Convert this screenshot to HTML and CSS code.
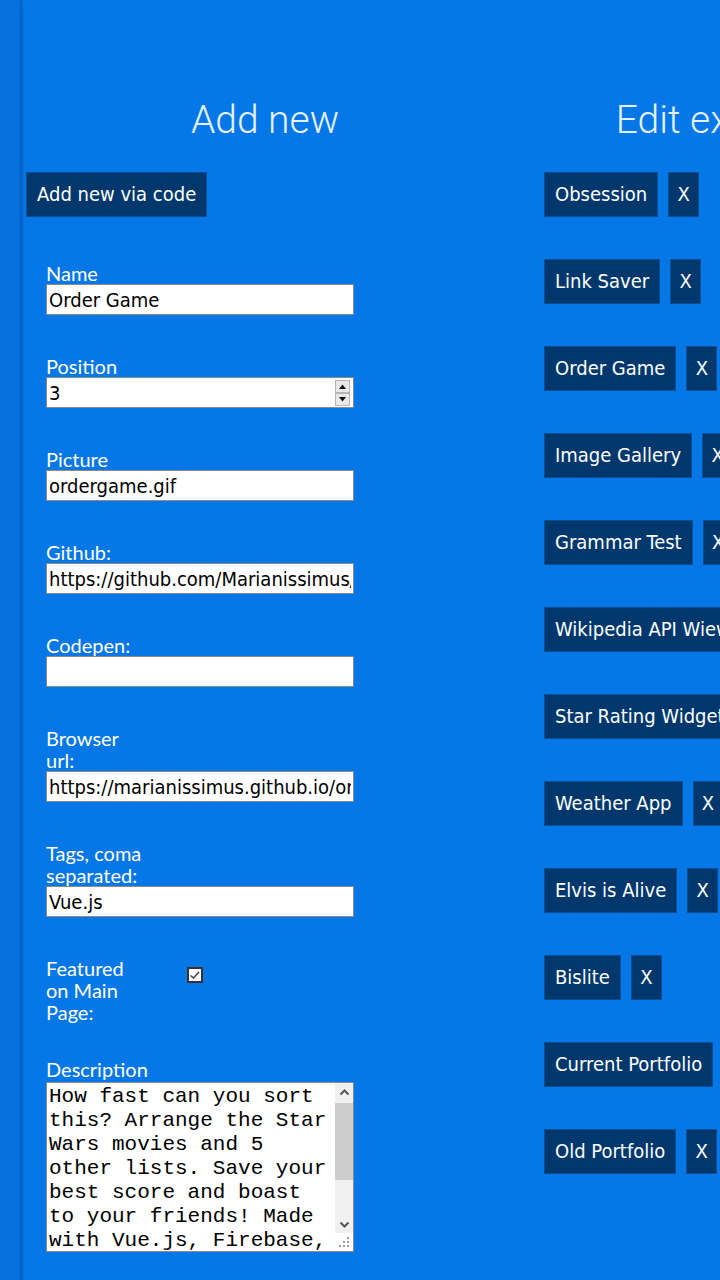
FILE: index.html
```html
<!DOCTYPE html>
<html lang="en">
<head>
<meta charset="utf-8">
<title>Admin</title>
<link rel="stylesheet" href="styles.css">
</head>
<body>
<div class="page">
  <aside class="strip"></aside>
  <section class="col col-add">
    <h1 class="title">Add new</h1>
    <button class="btn">Add new via code</button>
    <form class="form">
      <div class="field">
        <label class="lbl">Name</label>
        <input class="inp" type="text" value="Order Game">
      </div>
      <div class="field">
        <label class="lbl">Position</label>
        <div class="num-wrap">
          <input class="inp num" type="number" value="3">
          <span class="spin"><svg width="15" height="26" viewBox="0 0 15 26"><rect x="0.5" y="0.5" width="14" height="12" fill="#e9e9e9" stroke="#b5b5b5"/><rect x="0.5" y="13.5" width="14" height="12" fill="#e9e9e9" stroke="#b5b5b5"/><path d="M4 9 L7.5 4.5 L11 9 Z" fill="#111"/><path d="M4 17 L7.5 21.5 L11 17 Z" fill="#111"/></svg></span>
        </div>
      </div>
      <div class="field">
        <label class="lbl">Picture</label>
        <input class="inp" type="text" value="ordergame.gif">
      </div>
      <div class="field">
        <label class="lbl">Github:</label>
        <input class="inp" type="text" value="https://github.com/Marianissimus/order-game">
      </div>
      <div class="field">
        <label class="lbl">Codepen:</label>
        <input class="inp" type="text" value="">
      </div>
      <div class="field">
        <label class="lbl">Browser url:</label>
        <input class="inp" type="text" value="https://marianissimus.github.io/order-game">
      </div>
      <div class="field">
        <label class="lbl">Tags, coma separated:</label>
        <input class="inp" type="text" value="Vue.js">
      </div>
      <div class="field field-check">
        <label class="lbl">Featured on Main Page:</label>
        <span class="check"><svg width="16" height="16" viewBox="0 0 16 16"><rect x="1" y="1" width="14" height="14" fill="#fff" stroke="#333" stroke-width="2"/><path d="M3.5 8.5 L6.5 11 L12 5" fill="none" stroke="#444" stroke-width="1.6"/></svg></span>
      </div>
      <div class="field field-desc">
        <label class="lbl">Description</label>
        <div class="txt-wrap">
          <textarea class="txt">How fast can you sort this? Arrange the Star Wars movies and 5 other lists. Save your best score and boast to your friends! Made with Vue.js, Firebase, Sortable.js and a lot of patience. Play it on mobile or desktop and share your results.</textarea>
          <div class="sb">
            <span class="sb-btn"><svg width="17" height="17" viewBox="0 0 17 17"><path d="M4.5 10.5 L8.5 6.5 L12.5 10.5" fill="none" stroke="#555" stroke-width="2"/></svg></span>
            <span class="sb-track"><span class="sb-thumb"></span></span>
            <span class="sb-btn"><svg width="17" height="17" viewBox="0 0 17 17"><path d="M4.5 6.5 L8.5 10.5 L12.5 6.5" fill="none" stroke="#555" stroke-width="2"/></svg></span>
          </div>
          <span class="grip"><svg width="12" height="12" viewBox="0 0 12 12" fill="#9a9a9a"><rect x="9" y="1" width="2" height="2"/><rect x="5" y="5" width="2" height="2"/><rect x="9" y="5" width="2" height="2"/><rect x="1" y="9" width="2" height="2"/><rect x="5" y="9" width="2" height="2"/><rect x="9" y="9" width="2" height="2"/></svg></span>
        </div>
      </div>
    </form>
  </section>
  <section class="col col-edit">
    <h1 class="title">Edit existing</h1>
    <ul class="list">
      <li class="row"><button class="btn">Obsession</button><button class="btn x">X</button></li>
      <li class="row"><button class="btn">Link Saver</button><button class="btn x">X</button></li>
      <li class="row"><button class="btn">Order Game</button><button class="btn x">X</button></li>
      <li class="row"><button class="btn">Image Gallery</button><button class="btn x">X</button></li>
      <li class="row"><button class="btn">Grammar Test</button><button class="btn x">X</button></li>
      <li class="row"><button class="btn">Wikipedia API Wiewer</button><button class="btn x">X</button></li>
      <li class="row"><button class="btn">Star Rating Widget</button><button class="btn x">X</button></li>
      <li class="row"><button class="btn">Weather App</button><button class="btn x">X</button></li>
      <li class="row"><button class="btn">Elvis is Alive</button><button class="btn x">X</button></li>
      <li class="row"><button class="btn">Bislite</button><button class="btn x">X</button></li>
      <li class="row"><button class="btn">Current Portfolio</button><button class="btn x">X</button></li>
      <li class="row"><button class="btn">Old Portfolio</button><button class="btn x">X</button></li>
    </ul>
  </section>
</div>
</body>
</html>
```

FILE: styles.css
```css
html, body {
  margin: 0;
  padding: 0;
  overflow: hidden;
  width: 720px;
  height: 1280px;
  background: #0677e6;
}
.page {
  display: flex;
  width: 1500px;
  min-height: 1280px;
  background: #0677e6;
}
.strip {
  width: 20px;
  flex: none;
  background: #0670dc;
  box-shadow: 2px 0 3px rgba(0, 40, 100, 0.35);
}
.col {
  flex: none;
}
.col-add {
  width: 490px;
}
.col-edit {
  width: 418px;
}
.title {
  margin: 90px 0 22px;
  height: 60px;
  font-family: Roboto, "Open Sans", sans-serif;
  font-weight: 300;
  font-size: 39px;
  line-height: 60px;
  color: #e4f1ff;
  text-align: center;
  white-space: nowrap;
}
.btn {
  display: inline-block;
  height: 45px;
  padding: 0 10px;
  margin: 0;
  border: 1px solid #0b4f92;
  background: #00386e;
  color: #fff;
  font-family: "DejaVu Sans Condensed", "DejaVu Sans", sans-serif;
  font-size: 20px;
  line-height: 43px;
  white-space: nowrap;
  cursor: pointer;
}
.col-add > .btn {
  margin-left: 6px;
}
.form {
  margin: 45px 0 0 26px;
}
.field {
  margin-bottom: 40px;
}
.field-desc .lbl {
  margin-top: -2px;
  margin-bottom: 2px;
}
.lbl {
  display: block;
  width: 100px;
  font-family: Lato, "Open Sans", sans-serif;
  font-size: 20px;
  line-height: 22px;
  color: #fff;
}
.inp {
  display: block;
  box-sizing: border-box;
  width: 308px;
  height: 31px;
  margin: 0;
  padding: 0 2px;
  border: 1px solid #8a8a8a;
  background: #fff;
  color: #000;
  font-family: "DejaVu Sans Condensed", "DejaVu Sans", sans-serif;
  font-size: 20px;
}
.num-wrap {
  position: relative;
  width: 308px;
}
.num {
  -moz-appearance: textfield;
}
.num::-webkit-inner-spin-button,
.num::-webkit-outer-spin-button {
  -webkit-appearance: none;
  margin: 0;
}
.spin {
  position: absolute;
  right: 4px;
  top: 3px;
  width: 15px;
  height: 26px;
}
.spin svg {
  display: block;
}
.field-check {
  display: flex;
  align-items: flex-start;
  margin-bottom: 37px;
}
.check {
  margin: 10px 0 0 41px;
  width: 16px;
  height: 16px;
  display: block;
}
.check svg {
  display: block;
}
.txt-wrap {
  position: relative;
  width: 308px;
  height: 170px;
}
.txt {
  display: block;
  box-sizing: border-box;
  width: 308px;
  height: 170px;
  margin: 0;
  padding: 2px 19px 2px 2px;
  border: 1px solid #8a8a8a;
  background: #fff;
  color: #000;
  font-family: "Liberation Mono", monospace;
  font-size: 21px;
  line-height: 24px;
  resize: none;
  overflow: hidden;
}
.sb {
  position: absolute;
  right: 1px;
  top: 1px;
  bottom: 19px;
  width: 18px;
  display: flex;
  flex-direction: column;
  background: #f0f0f0;
}
.sb-btn {
  height: 18px;
  flex: none;
  display: flex;
  justify-content: center;
  align-items: center;
}
.sb-btn svg {
  display: block;
}
.sb-track {
  flex: 1;
  display: block;
  padding-top: 2px;
}
.sb-thumb {
  display: block;
  height: 77px;
  background: #cdcdcd;
}
.grip {
  position: absolute;
  right: 4px;
  bottom: 4px;
  width: 12px;
  height: 12px;
}
.grip svg {
  display: block;
}
.list {
  list-style: none;
  margin: 0;
  padding: 0 0 0 34px;
}
.row {
  display: flex;
  gap: 10px;
  margin-bottom: 42px;
}
.x {
  width: 31px;
  padding: 0;
  text-align: center;
}
```
